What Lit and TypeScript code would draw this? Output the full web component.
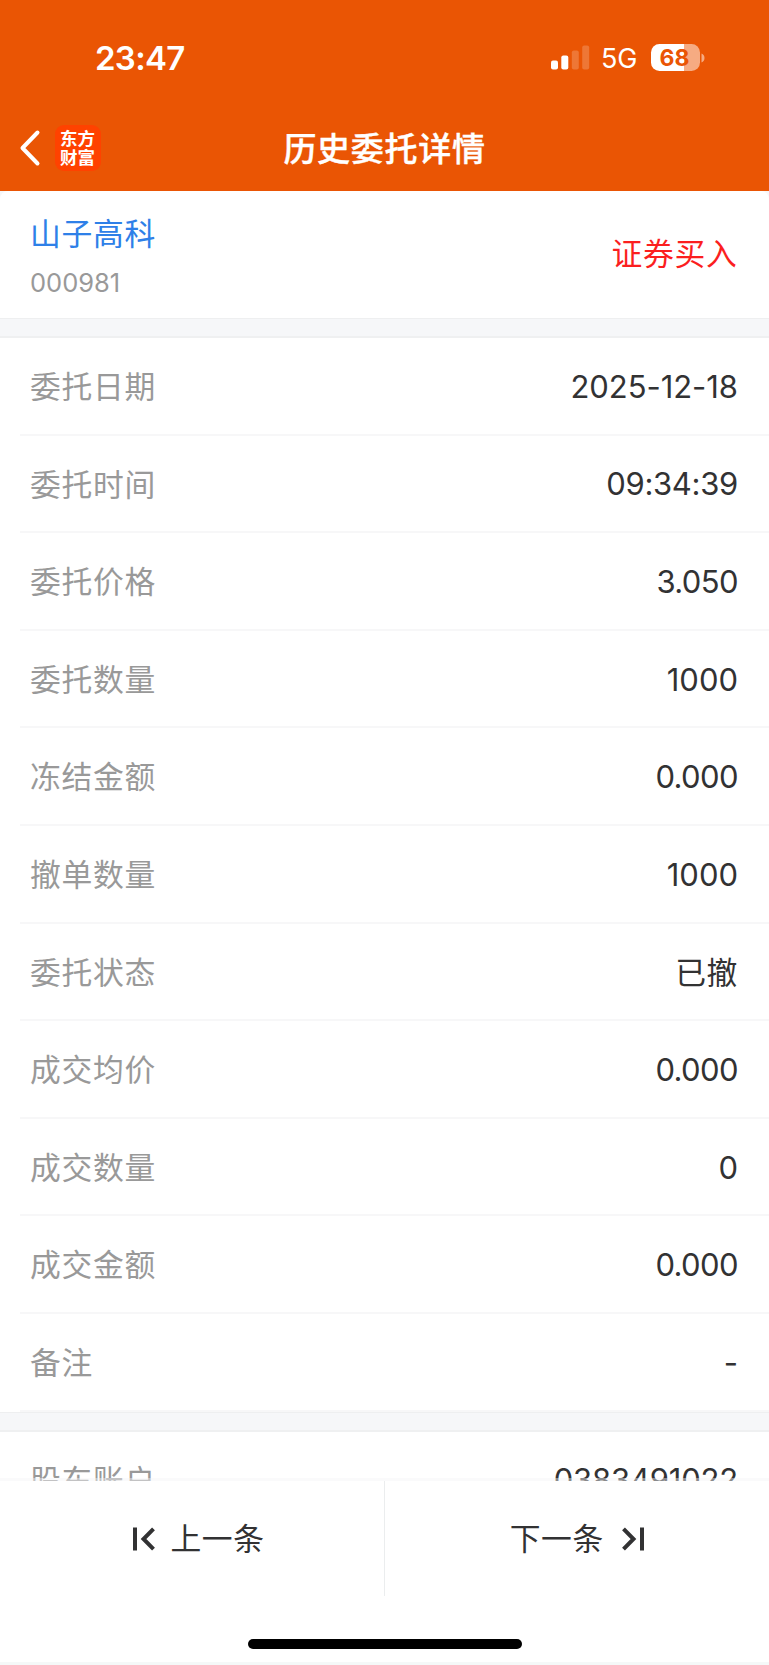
import { LitElement, html, css } from "lit";
import { customElement, property } from "lit/decorators.js";
import { classMap } from "lit/directives/class-map.js";

type Kind = "date" | "time" | "amount" | "count" | "account" | "text";

const orderRows: [string, string, Kind][] = [
  ["委托日期", "2025-12-18", "date"],
  ["委托时间", "09:34:39", "time"],
  ["委托价格", "3.050", "amount"],
  ["委托数量", "1000", "count"],
  ["冻结金额", "0.000", "amount"],
  ["撤单数量", "1000", "count"],
  ["委托状态", "已撤", "text"],
  ["成交均价", "0.000", "amount"],
  ["成交数量", "0", "count"],
  ["成交金额", "0.000", "amount"],
  ["备注", "-", "count"],
];

@customElement("detail-row")
export class DetailRow extends LitElement {
  @property() label = "";
  @property() value = "";
  @property() kind: Kind = "text";

  static styles = css`
    :host {
      display: flex;
      justify-content: space-between;
      align-items: center;
      box-sizing: border-box;
      height: 97.6px;
      margin-left: 20px;
      padding: 0 31px 0 10px;
      border-bottom: 2px solid #f7f7f8;
    }
    .label {
      color: #999;
      font-size: 30.8px;
      letter-spacing: 0.7px;
      padding-bottom: 2.4px;
    }
    .value {
      color: #323233;
      font-size: 31px;
      padding-top: 1.2px;
    }
    .text {
      font-size: 30.8px;
      letter-spacing: 0.6px;
      padding: 0 0 2.4px;
    }
    .date {
      letter-spacing: -0.05px;
    }
    .time {
      letter-spacing: -0.3px;
    }
    .amount {
      letter-spacing: -0.6px;
    }
    .account {
      letter-spacing: -0.2px;
    }
  `;

  render() {
    return html`<span class="label">${this.label}</span
      ><span class=${classMap({ value: true, [this.kind]: true })}>${this.value}</span>`;
  }
}

@customElement("status-bar")
export class StatusBar extends LitElement {
  static styles = css`
    :host {
      display: flex;
      justify-content: space-between;
      align-items: center;
      height: 115px;
      padding: 0 64px 0 95px;
      box-sizing: border-box;
      color: #fff;
    }
    .time {
      font-size: 33px;
      font-weight: 600;
      letter-spacing: -0.7px;
    }
    .right {
      display: flex;
      align-items: center;
    }
    .net {
      font-size: 27px;
      margin: 2px 13.5px 0 10.5px;
    }
    .battery {
      display: flex;
      align-items: center;
    }
    .body {
      width: 49px;
      height: 27px;
      border-radius: 8.5px;
      background: linear-gradient(to right, #fff 68%, #f6ab82 68%);
      color: #ea5504;
      font-size: 23px;
      font-weight: 700;
      line-height: 28px;
      text-align: center;
      text-indent: -2px;
    }
    svg {
      display: block;
    }
  `;

  render() {
    return html`
      <span class="time">23:47</span>
      <div class="right">
        <svg width="39" height="25" viewBox="0 0 39 25" fill="#fff">
          <rect x="0" y="15.5" width="7" height="9" rx="2" />
          <rect x="10.3" y="10.5" width="7" height="14" rx="2" />
          <rect x="20.8" y="5.5" width="7" height="19" rx="2" opacity=".2" />
          <rect x="31.2" y="0.5" width="7" height="24" rx="2" opacity=".2" />
        </svg>
        <span class="net">5G</span>
        <div class="battery">
          <div class="body">68</div>
          <svg width="5" height="10" viewBox="0 0 5 10"><path d="M1.5 0.5C5.5 2 5.5 8 1.5 9.5Z" fill="#f6ab82" /></svg>
        </div>
      </div>
    `;
  }
}

@customElement("app-root")
export class AppRoot extends LitElement {
  static styles = css`
    :host {
      display: flex;
      flex-direction: column;
      width: 769px;
      height: 1665px;
      overflow: hidden;
      background: #f6f7f9;
      font-family: Inter, "Noto Sans CJK SC", sans-serif;
    }
    .header {
      flex: none;
      height: 191px;
      background: #ea5504;
      color: #fff;
    }
    .nav {
      display: grid;
      grid-template-columns: 1fr auto 1fr;
      align-items: center;
      height: 66px;
    }
    .left {
      display: flex;
      align-items: center;
      gap: 13.5px;
      padding-left: 19px;
    }
    .logo {
      width: 46px;
      height: 46px;
      box-sizing: border-box;
      padding-top: 2.5px;
      border-radius: 9px;
      background: #ff4200;
      font-family: "Noto Sans CJK SC", sans-serif;
      font-size: 17.5px;
      line-height: 19.3px;
      font-weight: 700;
      text-align: center;
    }
    .title {
      font-size: 33px;
      font-weight: 500;
      letter-spacing: 0.7px;
      padding-bottom: 3px;
      -webkit-text-stroke: 0.4px #fff;
    }
    .content {
      flex: 1;
      min-height: 0;
      overflow: hidden;
    }
    .stock {
      display: flex;
      justify-content: space-between;
      align-items: center;
      height: 127px;
      padding: 0 30px;
      background: #fff;
      border-radius: 8px 8px 0 0;
    }
    .name {
      margin-top: 2px;
      color: #2e80e8;
      font-size: 30.8px;
      line-height: 44px;
      letter-spacing: 0.7px;
    }
    .code {
      margin-top: 11px;
      color: #999;
      font-size: 25.5px;
      line-height: 32px;
    }
    .side {
      color: #fb1f1f;
      font-size: 30.8px;
      letter-spacing: 0.7px;
      padding: 0 1.5px 6px 0;
    }
    .gap {
      height: 17px;
      border-top: 1px solid #eeeff0;
      border-bottom: 2px solid #eff0f1;
    }
    .group {
      background: #fff;
    }
    .footer {
      position: relative;
      flex: none;
      box-sizing: border-box;
      height: 187px;
      margin-top: -3px;
      border-top: 3px solid rgba(245, 245, 246, 0.45);
      border-bottom: 3px solid #f5f8f8;
      background: #fff;
      background-clip: padding-box;
      color: #323233;
    }
    .pager {
      display: grid;
      grid-template-columns: 1fr 1fr;
      height: 115px;
    }
    .btn {
      display: flex;
      align-items: center;
      justify-content: center;
      font-size: 30.8px;
      letter-spacing: 0.6px;
    }
    .btn span {
      padding-bottom: 4px;
    }
    .prev {
      gap: 15.5px;
      border-right: 1px solid #ebedee;
      padding-left: 14px;
    }
    .next {
      gap: 18px;
    }
    .home {
      width: 274px;
      height: 10px;
      margin: 43px auto 0;
      border-radius: 5px;
      background: #000;
    }
    svg {
      display: block;
    }
  `;

  render() {
    return html`
      <div class="header">
        <status-bar></status-bar>
        <div class="nav">
          <div class="left">
            <svg width="22" height="38" viewBox="0 0 22 38" fill="none" stroke="#fff" stroke-width="4" stroke-linecap="round" stroke-linejoin="round">
              <path d="M18.5 3.5 3.5 19 18.5 34.5" />
            </svg>
            <div class="logo">东方<br />财富</div>
          </div>
          <div class="title">历史委托详情</div>
        </div>
      </div>
      <div class="content">
        <div class="stock">
          <div>
            <div class="name">山子高科</div>
            <div class="code">000981</div>
          </div>
          <div class="side">证券买入</div>
        </div>
        <div class="gap"></div>
        <div class="group">
          ${orderRows.map(
            ([label, value, kind]) => html`<detail-row .label=${label} .value=${value} .kind=${kind}></detail-row>`
          )}
        </div>
        <div class="gap"></div>
        <div class="group"><detail-row label="股东账户" value="0383491022" kind="account"></detail-row></div>
      </div>
      <div class="footer">
        <div class="pager">
          <div class="btn prev">
            <svg width="22" height="24" viewBox="0 0 22 24" fill="none" stroke="#323233" stroke-width="4">
              <path d="M2 .5v23M20.5 1.8 10.5 12l10 10.2" />
            </svg>
            <span>上一条</span>
          </div>
          <div class="btn next">
            <span>下一条</span>
            <svg width="22" height="24" viewBox="0 0 22 24" fill="none" stroke="#323233" stroke-width="4">
              <path d="M20 .5v23M1.5 1.8 11.5 12l-10 10.2" />
            </svg>
          </div>
        </div>
        <div class="home"></div>
      </div>
    `;
  }
}
